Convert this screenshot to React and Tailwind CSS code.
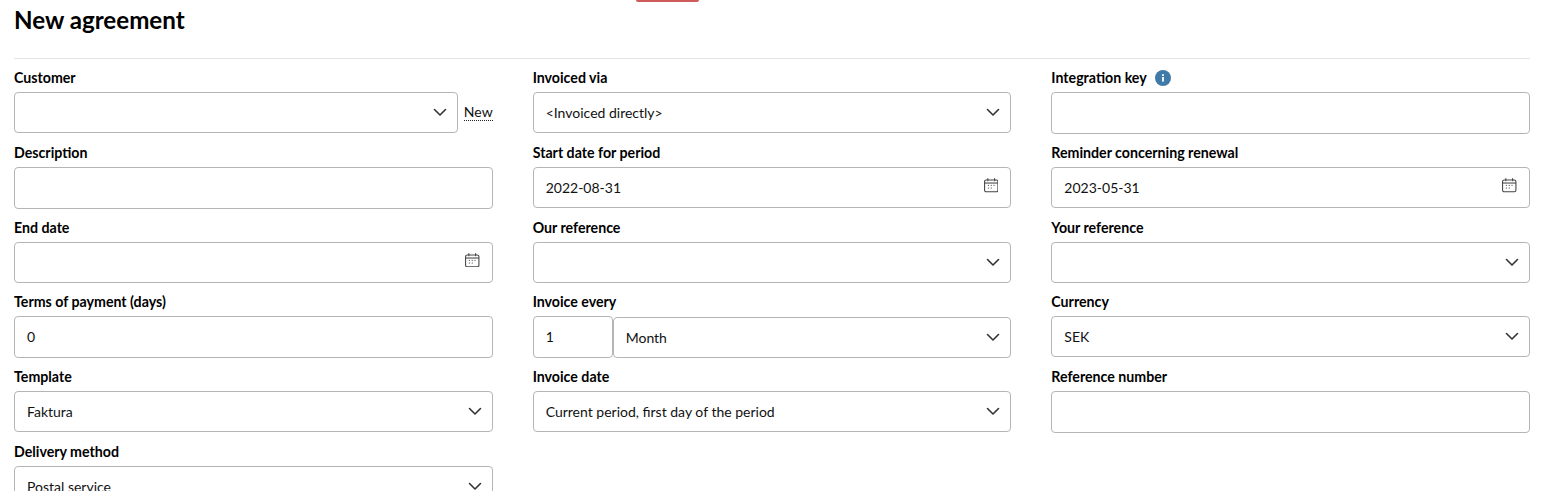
import React from 'react';

function Chevron({ className }) {
  return (
    <svg className={className} width="14" height="9" viewBox="0 0 14 9" fill="none">
      <path d="M1.5 1.5 7 7l5.5-5.5" stroke="#333" strokeWidth="1.6" strokeLinecap="round" strokeLinejoin="round" />
    </svg>
  );
}

function CalendarIcon() {
  return (
    <svg width="14.5" height="14.5" viewBox="0 0 15 15" fill="none" className="mb-1 mr-[2px]">
      <rect x="0.6" y="2" width="13.8" height="12.2" rx="1.6" stroke="#444" strokeWidth="1.1" />
      <path d="M0.6 5.2h13.8" stroke="#444" strokeWidth="1.1" />
      <path d="M4 0.6v2.2M11 0.6v2.2" stroke="#444" strokeWidth="1.1" strokeLinecap="round" />
      <path d="M4 7.6h1.2M6.9 7.6h1.2M9.8 7.6h1.2M4 10.4h1.2M6.9 10.4h1.2" stroke="#555" strokeWidth="1" />
    </svg>
  );
}

function InfoIcon() {
  return (
    <svg width="16" height="16" viewBox="0 0 16 16">
      <circle cx="8" cy="8" r="8" fill="#3f7aa8" />
      <rect x="7.1" y="7" width="1.8" height="4.6" fill="#fff" />
      <rect x="7.1" y="4.2" width="1.8" height="1.8" fill="#fff" />
    </svg>
  );
}

const boxClass = 'flex items-center justify-between rounded border border-[#b5b5b5] bg-white pl-3 pr-[10px] text-[14px] text-[#111]';

function Select({ value, className = '' }) {
  return (
    <div className={`${boxClass} h-[41px] ${className}`}>
      <span>{value}</span>
      <Chevron />
    </div>
  );
}

function TextBox({ value, className = '' }) {
  return (
    <div className={`${boxClass} h-[42px] pb-[1px] ${className}`}>
      <span>{value}</span>
    </div>
  );
}

function DateBox({ value }) {
  return (
    <div className={`${boxClass} h-[41px]`}>
      <span>{value}</span>
      <CalendarIcon />
    </div>
  );
}

function Field({ label, extra, children }) {
  return (
    <div className="h-[74.8px]">
      <div className="mb-[5px] flex h-[18px] items-center gap-2 text-[14.2px] font-bold leading-[18px] text-black">
        {label}
        {extra}
      </div>
      {children}
    </div>
  );
}

export default function App() {
  return (
    <div className="relative h-[491px] overflow-hidden bg-white pl-[14px] pr-[18px] font-['Lato',sans-serif]">
      {/* toast peeking in from the top */}
      <div className="absolute left-[636px] top-0 h-[2px] w-[63px] rounded-b bg-[#cf5c5c]" />

      <div className="h-[59px] border-b border-[#e4e4e4]">
        <h1 className="pt-[4px] text-[24.15px] font-bold leading-[32px] text-black">New agreement</h1>
      </div>

      <div className="grid grid-cols-3 gap-x-10 pt-[10px]">
        <div>
          <Field label="Customer">
            <div className="flex items-center gap-[6px]">
              <Select value="" className="flex-1" />
              <span className="border-b border-dotted border-[#222] text-[14px] leading-[16px] text-[#111]">New</span>
            </div>
          </Field>
          <Field label="Description"><TextBox value="" /></Field>
          <Field label="End date"><DateBox value="" /></Field>
          <Field label="Terms of payment (days)"><TextBox value="0" /></Field>
          <Field label="Template"><Select value="Faktura" /></Field>
          <Field label="Delivery method"><Select value="Postal service" /></Field>
        </div>

        <div>
          <Field label="Invoiced via"><Select value="<Invoiced directly>" /></Field>
          <Field label="Start date for period"><DateBox value="2022-08-31" /></Field>
          <Field label="Our reference"><Select value="" /></Field>
          <Field label="Invoice every">
            <div className="flex items-end">
              <TextBox value="1" className="w-[80px]" />
              <Select value="Month" className="flex-1" />
            </div>
          </Field>
          <Field label="Invoice date"><Select value="Current period, first day of the period" /></Field>
        </div>

        <div>
          <Field label="Integration key" extra={<InfoIcon />}><TextBox value="" /></Field>
          <Field label="Reminder concerning renewal"><DateBox value="2023-05-31" /></Field>
          <Field label="Your reference"><Select value="" /></Field>
          <Field label="Currency"><Select value="SEK" /></Field>
          <Field label="Reference number"><TextBox value="" /></Field>
        </div>
      </div>
    </div>
  );
}
